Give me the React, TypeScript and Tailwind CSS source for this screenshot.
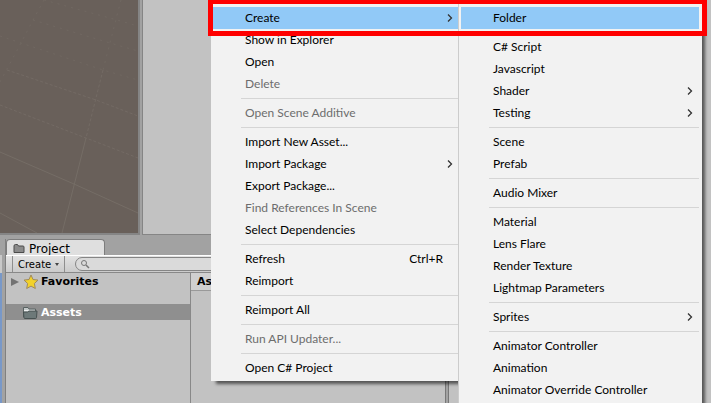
import { Fragment } from 'react';

interface MenuEntry {
  label: string;
  shortcut?: string;
  submenu?: boolean;
  disabled?: boolean;
  active?: boolean;
}

const assetMenu: MenuEntry[][] = [
  [
    { label: 'Create', submenu: true, active: true },
    { label: 'Show in Explorer' },
    { label: 'Open' },
    { label: 'Delete', disabled: true },
  ],
  [{ label: 'Open Scene Additive', disabled: true }],
  [
    { label: 'Import New Asset...' },
    { label: 'Import Package', submenu: true },
    { label: 'Export Package...' },
    { label: 'Find References In Scene', disabled: true },
    { label: 'Select Dependencies' },
  ],
  [{ label: 'Refresh', shortcut: 'Ctrl+R' }, { label: 'Reimport' }],
  [{ label: 'Reimport All' }],
  [{ label: 'Run API Updater...', disabled: true }],
  [{ label: 'Open C# Project' }],
];

const createMenu: MenuEntry[][] = [
  [{ label: 'Folder', active: true }],
  [
    { label: 'C# Script' },
    { label: 'Javascript' },
    { label: 'Shader', submenu: true },
    { label: 'Testing', submenu: true },
  ],
  [{ label: 'Scene' }, { label: 'Prefab' }],
  [{ label: 'Audio Mixer' }],
  [
    { label: 'Material' },
    { label: 'Lens Flare' },
    { label: 'Render Texture' },
    { label: 'Lightmap Parameters' },
  ],
  [{ label: 'Sprites', submenu: true }],
  [
    { label: 'Animator Controller' },
    { label: 'Animation' },
    { label: 'Animator Override Controller' },
  ],
];

function MenuItem({ label, shortcut, submenu, disabled, active }: MenuEntry) {
  return (
    <button
      type="button"
      role="menuitem"
      disabled={disabled}
      aria-haspopup={submenu ? 'menu' : undefined}
      className={`flex h-[22px] w-full items-center pl-8 text-left ${active ? 'bg-[#91c9f7]' : ''} ${disabled ? 'text-[#6d6d6d]' : 'text-black'}`}
    >
      <span className="flex-1 whitespace-nowrap">{label}</span>
      {shortcut && <span className="pr-4">{shortcut}</span>}
      {submenu && (
        <svg className="mr-1.5 h-2 w-1.5" viewBox="0 0 6 8" fill="none" stroke="#333" strokeWidth="1.3">
          <path d="M1 0.5 L4.5 4 L1 7.5" />
        </svg>
      )}
    </button>
  );
}

function Menu({ label, groups }: { label: string; groups: MenuEntry[][] }) {
  return (
    <div role="menu" aria-label={label}>
      {groups.map((group, i) => (
        <Fragment key={i}>
          {i > 0 && <hr className="my-[3px] ml-7 border-[#d5d5d5]" />}
          {group.map(item => (
            <MenuItem key={item.label} {...item} />
          ))}
        </Fragment>
      ))}
    </div>
  );
}

function SceneGrid() {
  return (
    <svg className="h-full w-full" viewBox="0 0 138 233" preserveAspectRatio="xMinYMin slice" fill="none" stroke="#756d66">
      <path d="M0 213 L37 233 M0 152 L74 184 L138 213 M86 138 L62 233" />
      <path strokeDasharray="3 2" strokeOpacity="0.8" d="M0 105 L86 138 L138 158 M7 70 L96 100 L138 116 M103 70 L86 138" />
      <path strokeDasharray="2 5" strokeOpacity="0.6" d="M0 36 L21 43 L103 70 L138 80 M33 20 L110 43 L138 51 M44 0 L117 20 L138 26 M44 0 L33 20 L21 43 L0 82 M121 0 L103 70" />
    </svg>
  );
}

function ProjectPanel() {
  return (
    <section className="flex min-w-0 flex-1 flex-col">
      <div className="flex h-4">
        <h2 className="flex w-[99px] items-center gap-1 rounded-t-sm border border-b-0 border-[#7d7d7d] bg-[#dfdfdf] pt-0.5 pl-1.5 text-xs">
          <svg className="h-3 w-3" viewBox="0 0 12 12">
            <path d="M1 9.5 V3 Q1 1.5 2.5 1.5 H4.5 L5.5 3 H10 Q11 3 11 4 V9.5 Z" fill="#8b8b8b" stroke="#4b4b4b" />
          </svg>
          Project
        </h2>
      </div>
      <div className="flex h-[18px] items-center border-y border-t-white border-b-[#888] bg-linear-to-b from-[#e2e2e2] to-[#cbcbcb] pl-1.5">
        <button type="button" className="flex h-full w-[53px] items-center gap-1 border-x border-[#8e8e8e] pt-px pl-[5px] text-[10px]">
          Create
          <svg className="h-1 w-1" viewBox="0 0 4 4">
            <path d="M0 0 H4 L2 3 Z" fill="#444" />
          </svg>
        </button>
        <label className="ml-2.5 flex h-3.5 flex-1 items-center rounded-l-full border border-[#858585] bg-[#dadada] pl-1">
          <svg className="h-2.5 w-2.5" viewBox="0 0 10 10" fill="none" stroke="#777">
            <circle cx="4" cy="4" r="2.5" />
            <path strokeWidth="1.5" d="M6 6 L9 9" />
          </svg>
          <input type="text" aria-label="Search assets" className="min-w-0 flex-1 bg-transparent text-[10px] outline-none" />
        </label>
      </div>
      <div className="flex min-h-0 flex-1 bg-[#c2c2c2] text-[11px] font-bold">
        <nav className="w-[185px] border-r border-[#888]">
          <button type="button" className="flex h-[18px] w-full items-center pl-[5px]">
            <svg className="mr-1 h-2 w-2" viewBox="0 0 8 8">
              <path d="M0 0 L8 4 L0 8 Z" fill="#727272" />
            </svg>
            <svg className="mr-0.5 h-4 w-4" viewBox="0 0 16 16">
              <path d="M8 1 L10 5.5 L15 6.1 L11.4 9.5 L12.3 14.5 L8 12.1 L3.7 14.5 L4.6 9.5 L1 6.1 L6 5.5 Z" fill="#f2d22b" stroke="#a08a5c" strokeLinejoin="round" />
            </svg>
            Favorites
          </button>
          <button type="button" className="mt-[13px] flex h-4 w-full items-center bg-[#8f8f8f] pt-0.5 pl-4 text-white">
            <svg className="mr-[3px] h-3.5 w-4" viewBox="0 0 16 14">
              <path d="M1.5 11 V1.5 H6 L7 3 H13.5 V6" fill="#c3c9c9" stroke="#596262" />
              <path d="M2 4.5 H13" stroke="#eef0f0" />
              <path d="M1.5 6 H5.5 L7 5 H15 L14.5 11.5 Q14.4 12.5 13.4 12.5 H3 Q2 12.5 1.9 11.5 Z" fill="#6d7979" stroke="#475151" />
            </svg>
            Assets
          </button>
        </nav>
        <div className="flex-1">
          <div className="h-[18px] border-b border-[#999] bg-[#d0d0d0] pt-px pl-1.5">Assets</div>
        </div>
      </div>
    </section>
  );
}

export default function App() {
  return (
    <main className="relative flex h-screen gap-0.5 overflow-hidden bg-[#a2a2a2] font-['DejaVu_Sans',sans-serif] text-black">
      <div className="flex min-w-0 flex-1 flex-col border-r border-[#777]">
        <div className="flex h-[235px] gap-0.5">
          <div className="w-[140px] border-r-2 border-b-2 border-[#858585] bg-[#69605a]">
            <SceneGrid />
          </div>
          <div className="flex-1 border-b border-l border-[#858585] bg-[#c2c2c2]" />
        </div>
        <div className="flex min-h-0 flex-1 gap-[3px] pt-1">
          <div className="mt-4 w-0.5 border-t-[18px] border-[#c8c8c8] bg-[#7898c8]" />
          <div className="flex min-w-0 flex-1 border-l border-[#808080]">
            <ProjectPanel />
          </div>
        </div>
      </div>
      <div className="w-[263px] border-l border-[#777] bg-[#c2c2c2]" />

      <div className="absolute top-1 left-[211px] w-[248px] bg-[#f2f2f2] pt-[3px] pb-0.5 pl-0.5 font-['Lato',sans-serif] text-xs shadow-[4px_4px_3px_-1px_#00000090]">
        <Menu label="Assets" groups={assetMenu} />
      </div>
      <div className="absolute top-1 left-[458px] w-[244px] border-l border-[#ccc] bg-[#f2f2f2] pt-[3px] pr-[3px] pb-3 pl-0.5 font-['Lato',sans-serif] text-xs shadow-[4px_4px_3px_-1px_#00000090]">
        <Menu label="Create" groups={createMenu} />
      </div>

      {/* Highlight around Create > Folder */}
      <div className="pointer-events-none absolute top-0 left-[208px] h-9 w-[499px] border-5 border-t-4 border-[#f00]" />
    </main>
  );
}
